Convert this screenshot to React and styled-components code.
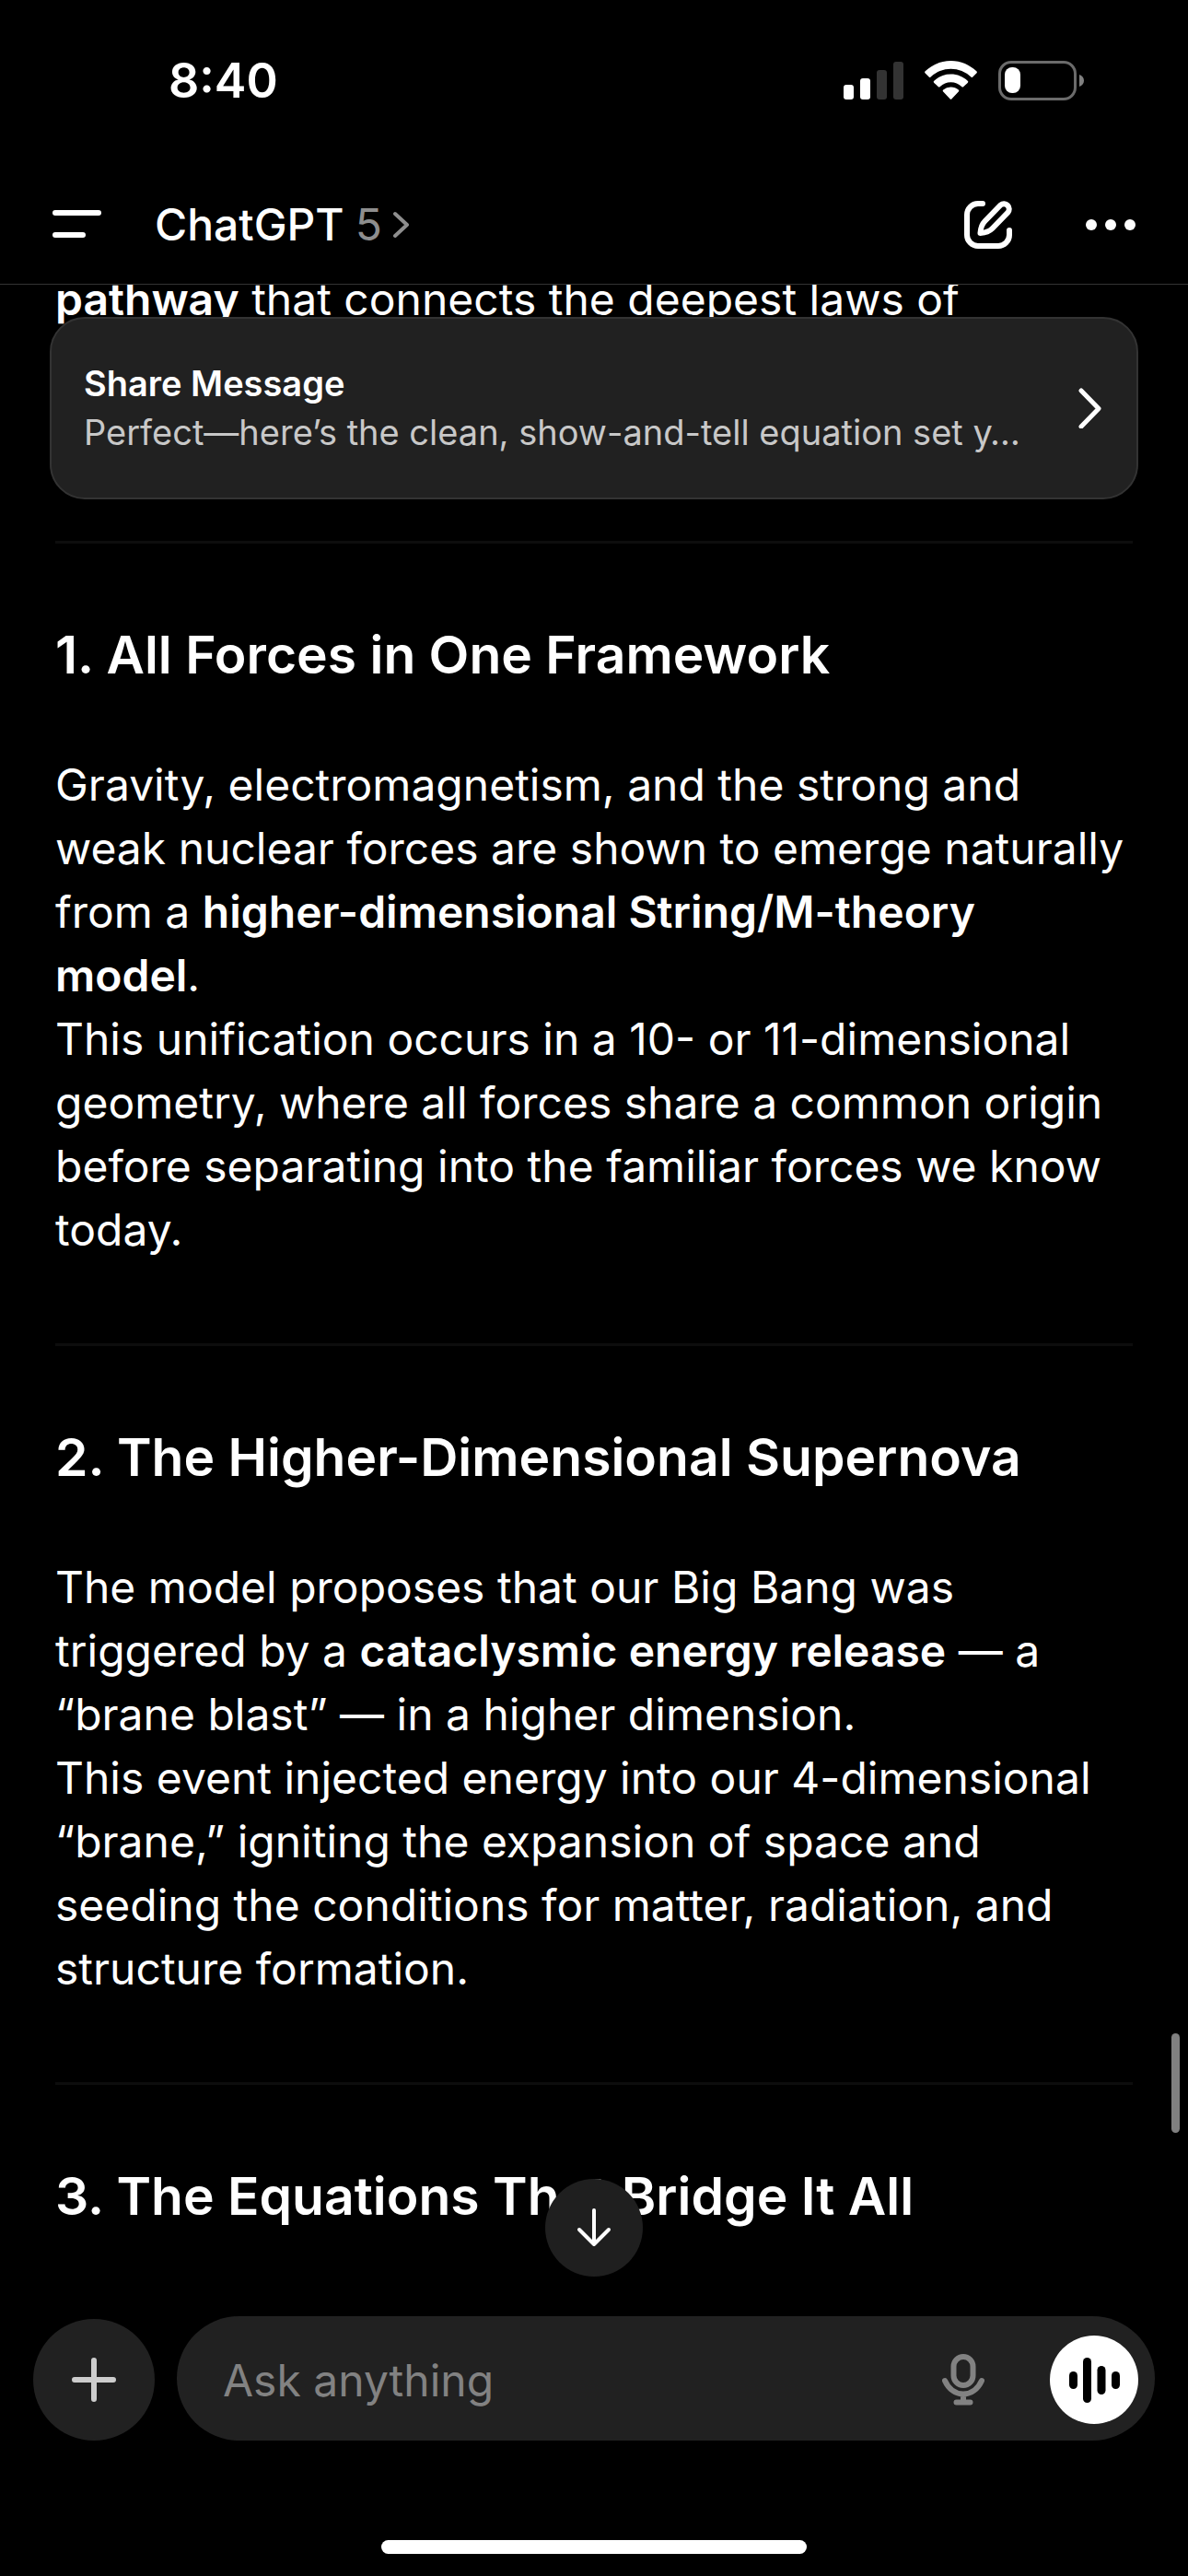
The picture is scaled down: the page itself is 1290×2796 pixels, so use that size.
import React from "react";
import styled, { createGlobalStyle } from "styled-components";

const GlobalStyle = createGlobalStyle`
  *, *::before, *::after { box-sizing: border-box; }
  body {
    margin: 0;
    background: #000;
    color: #fff;
    font-family: Inter, "Liberation Sans", sans-serif;
    font-size: 48px;
    line-height: 69px;
  }
  button, input { font: inherit; color: inherit; }
`;

const Screen = styled.div`
  position: relative;
  display: flex;
  flex-direction: column;
  min-height: 100vh;
  overflow: hidden;
`;

const StatusBar = styled.div`
  display: flex;
  align-items: center;
  justify-content: space-between;
  height: 174px;
  padding: 0 112px 0 183px;
`;

const Clock = styled.time`
  font-size: 52px;
  font-weight: 600;
`;

const StatusIcons = styled.div`
  display: flex;
  align-items: center;
  gap: 23px;
  svg { display: block; }
`;

const Top = styled.header`
  position: relative;
  z-index: 1;
  background: #000;
  border-bottom: 1px solid #333;
`;

const NavBar = styled.nav`
  display: flex;
  align-items: center;
  height: 134px;
  padding: 5px 57px 0;
`;

const PlainButton = styled.button`
  display: flex;
  align-items: center;
  justify-content: center;
  flex: none;
  padding: 0;
  border: 0;
  background: none;
  cursor: pointer;
  svg { display: block; }
`;

const ModelButton = styled(PlainButton)`
  margin: 0 auto 0 58px;
  gap: 12px;
  font-weight: 500;
`;

const Version = styled.span`
  color: #8e8e8e;
  font-weight: 400;
`;

const NavActions = styled.div`
  display: flex;
  align-items: center;
  gap: 80px;
`;

const Content = styled.main`
  position: relative;
  flex: 1;
`;

const ShareCard = styled.a`
  position: absolute;
  top: 35px;
  left: 54px;
  right: 54px;
  display: flex;
  align-items: center;
  justify-content: space-between;
  height: 198px;
  padding: 0 38px 0 35px;
  border: 2px solid #333;
  border-radius: 38px;
  background: #212121;
  color: #fff;
  text-decoration: none;
`;

const ShareText = styled.div`
  font-size: 38px;
  line-height: 53px;
  white-space: nowrap;
`;

const ShareTitle = styled.div`
  font-weight: 600;
`;

const SharePreview = styled.div`
  color: #c8c8c8;
`;

const Message = styled.article`
  margin-top: -19px;
  padding: 0 60px;
`;

const Paragraph = styled.p`
  margin: 0;
`;

const Intro = styled(Paragraph)`
  padding-bottom: 139px;
`;

const Divider = styled.hr`
  height: 3px;
  margin: 89px 0 0;
  border: 0;
  background: #0d0d0d;
`;

const Heading = styled.h2`
  margin: 0;
  padding: 83px 0 68px;
  font-size: 57px;
  font-weight: 600;
  line-height: 76px;
`;

const Bold = styled.strong`
  font-weight: 600;
`;

const ScrollThumb = styled.div`
  position: absolute;
  right: 9px;
  bottom: 199px;
  width: 9px;
  height: 108px;
  border-radius: 5px;
  background: #808080;
`;

const ScrollDown = styled(PlainButton)`
  position: absolute;
  bottom: 43px;
  left: calc(50% - 53px);
  width: 106px;
  height: 106px;
  border-radius: 50%;
  background: #1f1f1f;
`;

const Composer = styled.form`
  display: flex;
  align-items: flex-end;
  gap: 24px;
  padding: 0 36px;
`;

const AddButton = styled(PlainButton)`
  width: 132px;
  height: 132px;
  border-radius: 50%;
  background: #212121;
`;

const Field = styled.div`
  flex: 1;
  min-width: 0;
  display: flex;
  align-items: center;
  height: 135px;
  padding: 3px 18px 0 50px;
  border-radius: 68px;
  background: #212121;
`;

const Prompt = styled.input`
  flex: 1;
  min-width: 0;
  padding: 0;
  border: 0;
  outline: 0;
  background: none;
  &::placeholder { color: #828282; opacity: 1; }
`;

const VoiceButton = styled(PlainButton)`
  width: 96px;
  height: 96px;
  margin-left: 71px;
  border-radius: 50%;
  background: #fff;
`;

const HomeArea = styled.div`
  display: flex;
  justify-content: center;
  padding: 108px 0 24px;
`;

const HomeBar = styled.div`
  width: 462px;
  height: 15px;
  border-radius: 8px;
  background: #fff;
`;

const SignalIcon = () => (
  <svg width="65" height="41" viewBox="0 0 65 41" aria-hidden="true">
    <rect x="0" y="25" width="11" height="16" rx="3" fill="#fff" />
    <rect x="18" y="18" width="11" height="23" rx="3" fill="#fff" />
    <rect x="36" y="9" width="11" height="32" rx="3" fill="#333" />
    <rect x="54" y="0" width="11" height="41" rx="3" fill="#333" />
  </svg>
);

const WifiIcon = () => (
  <svg width="57" height="42" viewBox="0 0 57 42" fill="#fff" aria-hidden="true">
    <path d="M28.500 0C39.500 0 49 4.500 56.300 11.300a1.600 1.600 0 0 1 0 2.300L52.300 17.600a1.300 1.300 0 0 1-1.900 0A31.500 31.500 0 0 0 6.600 17.600a1.300 1.300 0 0 1-1.900 0L.7 13.600a1.600 1.600 0 0 1 0-2.300C8 4.500 17.500 0 28.500 0Z" />
    <path d="M28.500 14.500c7 0 13.400 2.700 18.200 7.200a1.500 1.500 0 0 1 0 2.200L42.300 28a1.500 1.500 0 0 1-2.100 0 17 17 0 0 0-23.400 0 1.500 1.500 0 0 1-2.100 0L10.300 23.900a1.500 1.500 0 0 1 0-2.200 26.500 26.500 0 0 1 18.200-7.200Z" />
    <path d="M28.500 28.500c3.200 0 6.100 1.200 8.300 3.100a1.400 1.400 0 0 1 0 2l-7.300 7.600a1.400 1.400 0 0 1-2 0L20.200 33.600a1.400 1.400 0 0 1 0-2 12.500 12.500 0 0 1 8.300-3.100Z" />
  </svg>
);

const BatteryIcon = () => (
  <svg width="94" height="43" viewBox="0 0 94 43" aria-hidden="true">
    <rect x="1.500" y="1.500" width="82" height="40" rx="12.500" fill="none" stroke="#6b6b6b" strokeWidth="3" />
    <rect x="7" y="7" width="17" height="28" rx="8" fill="#fff" />
    <path d="M88 15c3 .8 5 3.500 5 6.500s-2 5.700-5 6.500Z" fill="#808080" />
  </svg>
);

const MenuIcon = () => (
  <svg width="53" height="31" viewBox="0 0 53 31" fill="#fff" aria-hidden="true">
    <rect width="53" height="6" rx="3" />
    <rect y="24" width="36" height="6" rx="3" />
  </svg>
);

const SmallChevron = () => (
  <svg width="18" height="30" viewBox="0 0 18 30" fill="none" stroke="#8e8e8e" strokeWidth="4" strokeLinecap="round" strokeLinejoin="round" aria-hidden="true">
    <path d="m2 3 13 12L2 27" />
  </svg>
);

const ComposeIcon = () => (
  <svg width="52" height="52" viewBox="0 0 52 52" fill="none" stroke="#fff" strokeWidth="6" strokeLinecap="round" strokeLinejoin="round" aria-hidden="true">
    <path d="M20 3h-5C8.400 3 3 8.400 3 15v22c0 6.600 5.400 12 12 12h22c6.600 0 12-5.400 12-12v-5" />
    <path d="M39.500 4.500a5.700 5.700 0 0 1 8 8L30.500 30c-3.500 3.500-7.500 4.700-13 5 .3-5.500 1.500-9.500 5-13Z" />
  </svg>
);

const MoreIcon = () => (
  <svg width="54" height="12" viewBox="0 0 54 12" fill="#fff" aria-hidden="true">
    <circle cx="6" cy="6" r="6" />
    <circle cx="27" cy="6" r="6" />
    <circle cx="48" cy="6" r="6" />
  </svg>
);

const LargeChevron = () => (
  <svg width="25" height="44" viewBox="0 0 25 44" fill="none" stroke="#fff" strokeWidth="5" strokeLinecap="round" strokeLinejoin="round" aria-hidden="true">
    <path d="m3 3 19 19.500L3 42" />
  </svg>
);

const ArrowDownIcon = () => (
  <svg width="38" height="42" viewBox="0 0 38 42" fill="none" stroke="#fff" strokeWidth="4" strokeLinecap="round" strokeLinejoin="round" aria-hidden="true">
    <path d="M19 2v37M3 23l16 16 16-16" />
  </svg>
);

const PlusIcon = () => (
  <svg width="48" height="48" viewBox="0 0 48 48" fill="none" stroke="#cdcdcd" strokeWidth="6" strokeLinecap="round" aria-hidden="true">
    <path d="M24 3v42M3 24h42" />
  </svg>
);

const MicIcon = () => (
  <svg width="46" height="56" viewBox="0 0 46 56" fill="none" stroke="#828282" strokeWidth="6" strokeLinecap="round" strokeLinejoin="round" aria-hidden="true">
    <rect x="12.500" y="3" width="21" height="31" rx="10.500" />
    <path d="M3 29c4 9 11.500 14.500 20 14.500S39 38 43 29M23 44v8M15.500 52.500h15" />
  </svg>
);

const WaveIcon = () => (
  <svg width="55" height="49" viewBox="0 0 55 49" fill="#000" aria-hidden="true">
    <rect x="0" y="15" width="9" height="19" rx="4.500" />
    <rect x="15" y="0" width="9" height="49" rx="4.500" />
    <rect x="30.500" y="9" width="9" height="31" rx="4.500" />
    <rect x="46" y="15" width="9" height="19" rx="4.500" />
  </svg>
);

export default function App() {
  return (
    <Screen>
      <GlobalStyle />
      <Top>
        <StatusBar>
          <Clock>8:40</Clock>
          <StatusIcons>
            <SignalIcon />
            <WifiIcon />
            <BatteryIcon />
          </StatusIcons>
        </StatusBar>
        <NavBar>
          <PlainButton aria-label="Menu"><MenuIcon /></PlainButton>
          <ModelButton>
            <span>ChatGPT</span>
            <Version>5</Version>
            <SmallChevron />
          </ModelButton>
          <NavActions>
            <PlainButton aria-label="New chat"><ComposeIcon /></PlainButton>
            <PlainButton aria-label="More"><MoreIcon /></PlainButton>
          </NavActions>
        </NavBar>
      </Top>

      <Content>
        <Message>
          <Intro><Bold>pathway</Bold> that connects the deepest laws of</Intro>

          <Divider />
          <Heading>1. All Forces in One Framework</Heading>
          <Paragraph>
            Gravity, electromagnetism, and the strong and weak nuclear forces are shown to emerge
            naturally from a <Bold>higher-dimensional String/M-theory<br />model</Bold>.
          </Paragraph>
          <Paragraph>
            This unification occurs in a 10- or 11-dimensional geometry, where all forces share a
            common origin before separating into the familiar forces we know today.
          </Paragraph>

          <Divider />
          <Heading>2. The Higher-Dimensional Supernova</Heading>
          <Paragraph>
            The model proposes that our Big Bang was triggered by a{" "}
            <Bold>cataclysmic energy release</Bold> — a “brane blast” — in a higher dimension.
          </Paragraph>
          <Paragraph>
            This event injected energy into our 4-dimensional “brane,” igniting the expansion of
            space and seeding the conditions for matter, radiation, and structure formation.
          </Paragraph>

          <Divider />
          <Heading>3. The Equations That Bridge It All</Heading>
        </Message>

        <ShareCard href="#share">
          <ShareText>
            <ShareTitle>Share Message</ShareTitle>
            <SharePreview>Perfect—here’s the clean, show-and-tell equation set y…</SharePreview>
          </ShareText>
          <LargeChevron />
        </ShareCard>
        <ScrollThumb />
        <ScrollDown aria-label="Scroll to bottom"><ArrowDownIcon /></ScrollDown>
      </Content>

      <Composer onSubmit={(event) => event.preventDefault()}>
        <AddButton type="button" aria-label="Add attachment"><PlusIcon /></AddButton>
        <Field>
          <Prompt type="text" placeholder="Ask anything" aria-label="Ask anything" />
          <PlainButton type="button" aria-label="Dictate"><MicIcon /></PlainButton>
          <VoiceButton type="button" aria-label="Voice mode"><WaveIcon /></VoiceButton>
        </Field>
      </Composer>
      <HomeArea><HomeBar /></HomeArea>
    </Screen>
  );
}
